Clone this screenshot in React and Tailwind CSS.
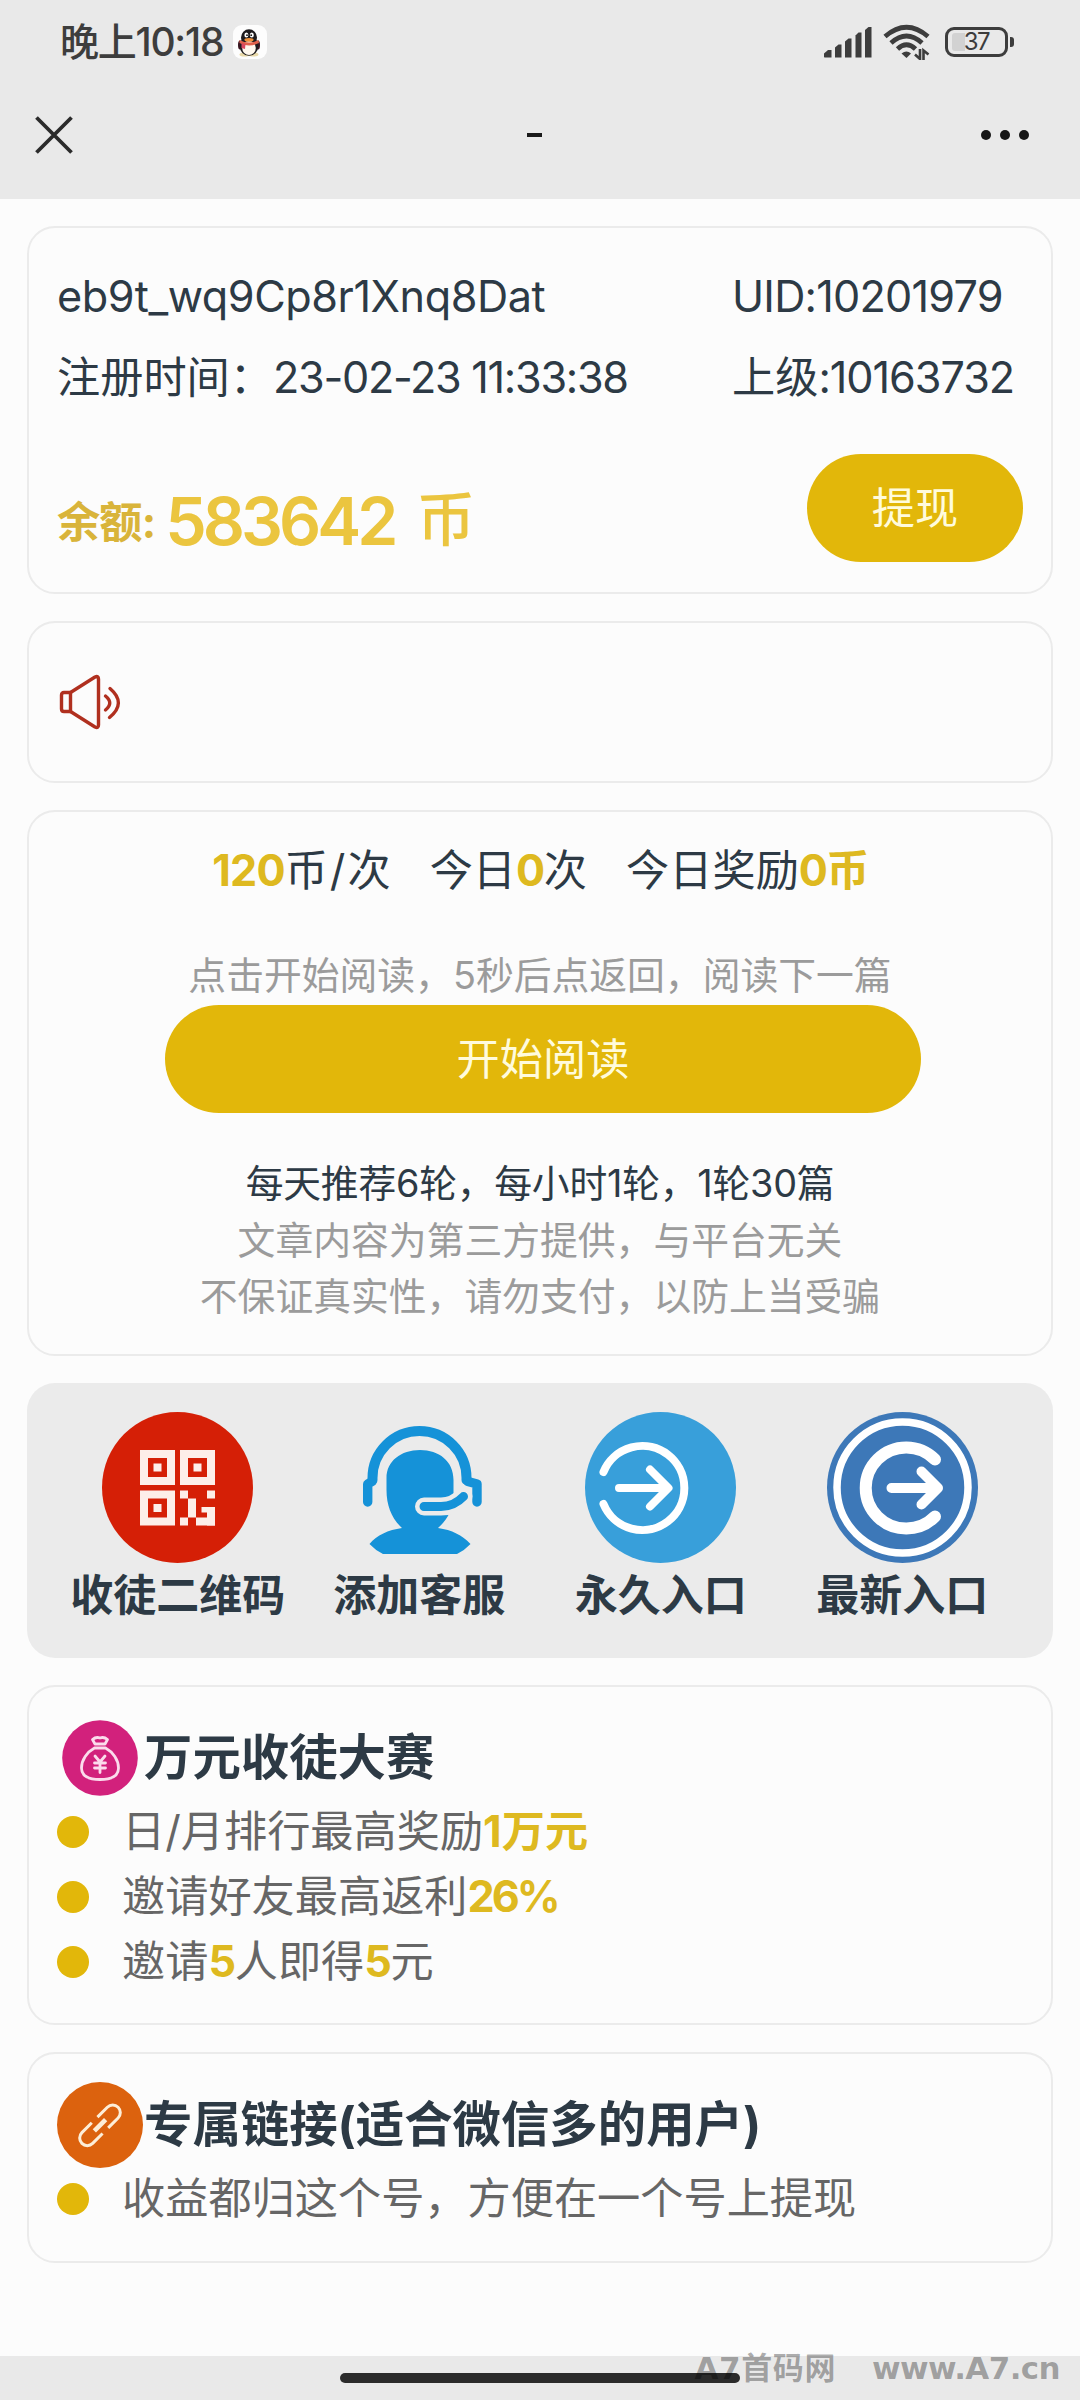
import React from 'react';

const Card = ({ className = '', children }) => (
  <section
    className={`rounded-[28px] border-2 border-[#ebebeb] bg-[#fcfcfc] ${className}`}
  >
    {children}
  </section>
);

const Gold = ({ className = '', children }) => (
  <span className={`font-bold text-[#deb920] ${className}`}>{children}</span>
);

const PenguinIcon = () => (
  <svg className="h-[34px] w-[34px]" viewBox="0 0 34 34">
    <rect width="34" height="34" rx="9" fill="#fdfdfd" />
    <ellipse cx="11.5" cy="29.5" rx="5" ry="2" fill="#e9d9a8" />
    <ellipse cx="20.5" cy="29.5" rx="5" ry="2" fill="#e9d9a8" />
    <ellipse cx="7" cy="20" rx="2" ry="4.5" fill="#3a1520" />
    <ellipse cx="25" cy="20" rx="2" ry="4.5" fill="#3a1520" />
    <ellipse cx="16" cy="21" rx="9.3" ry="9.8" fill="#1d1b1e" />
    <ellipse cx="16" cy="12.5" rx="8" ry="8.3" fill="#1d1b1e" />
    <ellipse cx="16" cy="23" rx="6.8" ry="7" fill="#fff8ee" />
    <path d="M6.5 15 Q16 20 25.5 15 L26 18 Q16 23 6.5 18 Z" fill="#e0604a" />
    <path d="M8.5 18 L12.5 19 L12 24 L8.5 23 Z" fill="#d9485f" />
    <ellipse cx="13.4" cy="10" rx="2" ry="2.5" fill="#fff" />
    <ellipse cx="18.8" cy="10" rx="2" ry="2.5" fill="#fff" />
    <circle cx="14" cy="10.2" r="0.9" fill="#111" />
    <circle cx="18.2" cy="10.2" r="0.9" fill="#111" />
    <ellipse cx="16" cy="14.8" rx="4.6" ry="1.9" fill="#f0913a" />
  </svg>
);

const SignalIcon = () => (
  <svg className="h-8 w-12" viewBox="0 0 48 32" fill="#3d3d3d">
    <path d="M0 31V27.5L4 24H7.5V31.5H0.5Z" />
    <path d="M11 31.5V21.5L14.5 18.5H17.5V31.5Z" />
    <path d="M21 31.5V15.5L24.5 12.5H27.5V31.5Z" />
    <path d="M31.5 31.5V9.5L34.5 6.5H37.5V31.5Z" />
    <path d="M41 31.5V4L44.5 1H47.5V31.5Z" />
  </svg>
);

const WifiIcon = () => (
  <svg
    className="h-[36px] w-[48px]"
    viewBox="0 0 48 36"
    fill="none"
    stroke="#3d3d3d"
    strokeWidth="4.8"
  >
    <path d="M2 12.5Q23.5 -6 45 12.5" />
    <path d="M8 19Q23.5 5 39 19" />
    <path d="M14.5 25Q23.5 16.5 32.5 25" />
    <path d="M18.5 29.5Q23.5 25.5 28 29.5L23.5 34Z" fill="#3d3d3d" stroke="none" />
    <path d="M37 25V35L32 30.5" strokeWidth="2.6" />
    <path d="M40.5 36V26.5L45.5 30.5" strokeWidth="2.6" />
  </svg>
);

const SpeakerIcon = () => (
  <svg
    className="h-[60px] w-[66px]"
    viewBox="0 0 66 60"
    fill="none"
    stroke="#b0301f"
    strokeWidth="3.4"
    strokeLinecap="round"
    strokeLinejoin="round"
  >
    <path d="M13.5 20.5H7Q4.5 20.5 4.5 23V37Q4.5 39.5 7 39.5H13.5Z" />
    <path d="M13.5 20.5L38 5Q41.5 3.5 41.5 7V53Q41.5 56.5 38 55L13.5 39.5" />
    <path d="M48.5 24Q57 31 48.5 38" />
    <path d="M53 16.5Q70 31 52.5 45.5" />
  </svg>
);

const QrIcon = () => (
  <svg className="size-[151px]" viewBox="0 0 151 151">
    <circle cx="75.5" cy="75.5" r="75.5" fill="#d51f06" />
    <g fill="none" stroke="#fdeee9" strokeWidth="8">
      <rect x="42" y="42" width="27" height="27" />
      <rect x="82" y="42" width="27" height="27" />
      <rect x="42" y="82.5" width="27" height="27" />
    </g>
    <g fill="#fdeee9">
      <rect x="51.5" y="51.5" width="8" height="8" />
      <rect x="91.5" y="51.5" width="8" height="8" />
      <rect x="51.5" y="92" width="8" height="8" />
      <rect x="78" y="78.5" width="8" height="8" />
      <rect x="105" y="78.5" width="8" height="8" />
      <rect x="86" y="86.5" width="8" height="19" />
      <rect x="78" y="105.5" width="8" height="8" />
      <rect x="94" y="105.5" width="19" height="8" />
      <rect x="105" y="95" width="8" height="18.5" />
      <rect x="99.5" y="95" width="6" height="5.5" />
    </g>
  </svg>
);

const ServiceIcon = () => (
  <svg className="size-[151px]" viewBox="0 0 151 151">
    <g fill="none" stroke="#1592d8" strokeLinecap="round" strokeLinejoin="round">
      <path d="M28.5 68V66A47 47 0 0 1 122.5 66V68" strokeWidth="10" />
      <path d="M28 69.5L23.7 72V90" strokeWidth="9.4" />
      <path d="M124 69.5L133 72V90" strokeWidth="9.4" />
    </g>
    <path
      d="M76 38C95 38 109.5 49 109.5 68V84C109.5 97 103 108 94 116C108 118 118 123 126.5 132Q121 138 113 142H39Q31 138 25.5 132C33 123 44 118 58 116C48 107 42.5 94 42.5 78V66C42.5 49 57 38 76 38Z"
      fill="#1592d8"
    />
    <path
      d="M119.5 84.5Q110 94.5 97 94.5H80"
      fill="none"
      stroke="#ebebeb"
      strokeWidth="18"
      strokeLinecap="round"
    />
    <path
      d="M119.5 84.5Q110 94.5 97 94.5H80"
      fill="none"
      stroke="#1592d8"
      strokeWidth="9"
      strokeLinecap="round"
    />
  </svg>
);

const PermanentIcon = () => (
  <svg className="size-[151px]" viewBox="0 0 151 151">
    <circle cx="75.5" cy="75.5" r="75.5" fill="#389fda" />
    <g
      fill="none"
      stroke="#fff"
      strokeWidth="8"
      strokeLinecap="round"
      strokeLinejoin="round"
    >
      <path d="M18.5 60A42 42 0 1 1 18.5 92" />
      <path d="M34 76H83M65 57.5L83.5 76L65 94.5" />
    </g>
  </svg>
);

const LatestIcon = () => (
  <svg className="size-[151px]" viewBox="0 0 151 151">
    <circle cx="75.5" cy="75.5" r="75.5" fill="#3d78b8" />
    <g
      fill="none"
      stroke="#fff"
      strokeWidth="10"
      strokeLinecap="round"
      strokeLinejoin="round"
    >
      <circle cx="75.5" cy="75.5" r="65.5" strokeWidth="7.5" />
      <path d="M108 47.5A40.5 40.5 0 1 0 108 104.5" strokeWidth="12" />
      <path d="M64.5 76H111M94.5 59.5L111 76L94.5 92.5" />
    </g>
  </svg>
);

const MoneyBagIcon = () => (
  <svg className="size-[86px]" viewBox="0 0 86 86">
    <circle cx="43" cy="43" r="37.8" fill="#d2217c" />
    <g
      fill="none"
      stroke="#fbdcec"
      strokeWidth="2.8"
      strokeLinecap="round"
      strokeLinejoin="round"
    >
      <path d="M38 29L35.5 24.5Q39 21.5 43 23Q47 21.5 50.5 24.5L48 29Z" />
      <path d="M37.5 33H48.5C56 37 61.5 45 61.5 53C61.5 61 55 64.5 43 64.5C31 64.5 24.5 61 24.5 53C24.5 45 30 37 37.5 33Z" />
      <path d="M38 41L43 47L48 41M43 47V57.5M37.5 48H48.5M37.5 53H48.5" />
    </g>
  </svg>
);

const LinkIcon = () => (
  <svg className="size-[86px]" viewBox="0 0 86 86">
    <circle cx="43" cy="43" r="43" fill="#dc620e" />
    <g
      fill="none"
      stroke="#fdeed8"
      strokeWidth="3"
      transform="translate(43 43.3) rotate(-45)"
    >
      <path d="M4 -7.6H18A7.6 7.6 0 0 1 18 7.6H4" />
      <path d="M-4 -7.6H-18A7.6 7.6 0 0 0 -18 7.6H-4" />
      <path d="M-8 0H8" strokeWidth="4.6" />
    </g>
  </svg>
);

const entries = [
  { label: '收徒二维码', Icon: QrIcon },
  { label: '添加客服', Icon: ServiceIcon },
  { label: '永久入口', Icon: PermanentIcon },
  { label: '最新入口', Icon: LatestIcon },
];

const Bullet = ({ children }) => (
  <li className="flex h-[65px] items-center text-[43.2px] leading-[65px] text-[#666]">
    <span className="mr-[33px] size-8 shrink-0 rounded-full bg-[#e2b70a]" />
    <span className="whitespace-nowrap">{children}</span>
  </li>
);

const App = () => {
  return (
    <div className="relative flex h-[2400px] w-[1080px] flex-col overflow-hidden bg-[#fcfcfc] font-['Inter','Noto_Sans_CJK_SC',sans-serif] text-[#2d3a45]">
      <header className="h-[199px] shrink-0 bg-[#e9e9e9]">
        <div className="flex h-[84px] items-center justify-between pl-[60px] pr-[66px]">
          <div className="flex items-center gap-[10px] text-[#3d3d3d]">
            <span className="text-[39px] font-medium leading-[84px] tracking-[-0.032em]">
              晚上10:18
            </span>
            <PenguinIcon />
          </div>
          <div className="flex items-center">
            <SignalIcon />
            <div className="ml-[11px]">
              <WifiIcon />
            </div>
            <div className="relative ml-[14px] flex h-[30px] w-[63px] items-center justify-center rounded-[9px] border-[3px] border-[#3d3d3d] text-[24px] leading-none text-[#3d3d3d]">
              <span className="absolute left-[4px] top-[3px] h-[18px] w-[13px] rounded-l-[3px] bg-[#d2d2d2]" />
              <span className="relative tracking-[-0.06em]">37</span>
            </div>
            <span className="ml-[2px] h-[10px] w-1 rounded-r-[3px] bg-[#3d3d3d]" />
          </div>
        </div>
        <div className="flex h-[101px] items-center justify-between pl-[35px] pr-[51px]">
          <svg className="h-[38px] w-[38px]" viewBox="0 0 38 38" stroke="#2b2b2b" strokeWidth="3.8">
            <path d="M1.5 1.5L36.5 36.5M36.5 1.5L1.5 36.5" />
          </svg>
          <span className="ml-[15px] h-1 w-[15px] bg-[#1a1a1a]" />
          <div className="flex gap-[9px]">
            <span className="size-[10px] rounded-full bg-[#161616]" />
            <span className="size-[10px] rounded-full bg-[#161616]" />
            <span className="size-[10px] rounded-full bg-[#161616]" />
          </div>
        </div>
      </header>

      <main className="flex flex-1 flex-col gap-[27px] px-[27px] pt-[27px]">
        <Card className="h-[368px] px-[28px] pt-[28px] text-[43.2px]">
          <div className="flex h-[81px] items-center whitespace-nowrap">
            <span className="w-[675px] tracking-[-0.01em]">eb9t_wq9Cp8r1Xnq8Dat</span>
            <span className="tracking-[-0.018em]">UID:10201979</span>
          </div>
          <div className="flex h-[81px] items-center whitespace-nowrap">
            <span className="w-[675px]">
              注册时间：<span className="tracking-[-0.03em]">23-02-23 11:33:38</span>
            </span>
            <span>
              上级<span className="tracking-[-0.024em]">:10163732</span>
            </span>
          </div>
          <div className="mt-[36px] flex h-[108px] items-center justify-between whitespace-nowrap">
            <div className="flex items-center font-bold text-[#d9b43a]">
              <span className="mt-[28px] tracking-[-0.02em]">余额:</span>
              <span className="ml-[10px] mt-[26px] text-[66px] font-semibold text-[#ebc53f] tracking-[-0.06em]">
                583642
              </span>
              <span className="ml-[22px] mt-[24px] text-[59px] font-medium text-[#ebc53f]">
                币
              </span>
            </div>
            <button className="h-[108px] w-[216px] rounded-full bg-[#e2b70a] text-[43.2px] text-[#fffbdc]">
              提现
            </button>
          </div>
        </Card>

        <Card className="flex h-[162px] items-center px-[28px]">
          <SpeakerIcon />
        </Card>

        <Card className="flex h-[546px] flex-col items-center pt-[26px] text-[37.8px] whitespace-nowrap">
          <div className="flex gap-[39px] text-[43.2px] leading-[65px]">
            <span>
              <Gold className="tracking-[-0.02em]">120</Gold>币
              <span className="mx-[2px]">/</span>次
            </span>
            <span>
              今日<Gold className="tracking-[-0.03em]">0</Gold>次
            </span>
            <span>
              今日奖励<Gold className="tracking-[-0.04em]">0币</Gold>
            </span>
          </div>
          <p className="mt-[44px] leading-[57px] text-[#9b9b9b]">
            点击开始阅读，5秒后点返回，阅读下一篇
          </p>
          <button className="ml-[6px] mt-px h-[108px] w-[756px] rounded-full bg-[#e2b70a] text-[43.2px] leading-[104px] text-[#fffbdc]">
            开始阅读
          </button>
          <p className="mt-[42px] leading-[57px] tracking-[-0.006em]">
            每天推荐6轮，每小时1轮，1轮30篇
          </p>
          <p className="leading-[56px] text-[#9b9b9b]">
            文章内容为第三方提供，与平台无关
          </p>
          <p className="leading-[56px] text-[#9b9b9b]">
            不保证真实性，请勿支付，以防上当受骗
          </p>
        </Card>

        <section className="grid h-[275px] grid-cols-4 rounded-[28px] bg-[#ebebeb] px-[30px] pt-[29px]">
          {entries.map(({ label, Icon }) => (
            <div key={label} className="flex flex-col items-center">
              <Icon />
              <span className="text-[43px] font-bold leading-[65px] whitespace-nowrap">
                {label}
              </span>
            </div>
          ))}
        </section>

        <Card className="h-[340px] px-[28px] pt-[28px]">
          <h2 className="flex h-[86px] items-center gap-px text-[48.4px] font-bold">
            <MoneyBagIcon />
            万元收徒大赛
          </h2>
          <ul className="-mt-[2px]">
            <Bullet>
              日/月排行最高奖励<Gold>1万元</Gold>
            </Bullet>
            <Bullet>
              邀请好友最高返利<Gold className="tracking-[-0.07em]">26%</Gold>
            </Bullet>
            <Bullet>
              邀请<Gold className="tracking-[-0.03em]">5</Gold>人即得
              <Gold className="tracking-[-0.03em]">5</Gold>元
            </Bullet>
          </ul>
        </Card>

        <Card className="h-[211px] px-[28px] pt-[28px]">
          <h2 className="flex h-[86px] items-center gap-px text-[48.4px] font-bold">
            <LinkIcon />
            专属链接(适合微信多的用户)
          </h2>
          <ul className="-mt-[2px]">
            <Bullet>收益都归这个号，方便在一个号上提现</Bullet>
          </ul>
        </Card>
      </main>

      <footer className="flex h-11 shrink-0 justify-center bg-[#e9e9e9]">
        <span className="mt-[17px] h-[10px] w-[400px] rounded-full bg-[#2b2b2b]" />
      </footer>

      <div className="absolute bottom-[14px] right-[20px] flex items-center gap-[36px] font-['DejaVu_Sans','Noto_Sans_CJK_SC',sans-serif] text-[31px] font-bold leading-[36px] text-black/33 whitespace-nowrap">
        <span className="tracking-[0.02em]">A7首码网</span>
        <span className="tracking-[-0.02em]">www.A7.cn</span>
      </div>
    </div>
  );
};

export default App;
